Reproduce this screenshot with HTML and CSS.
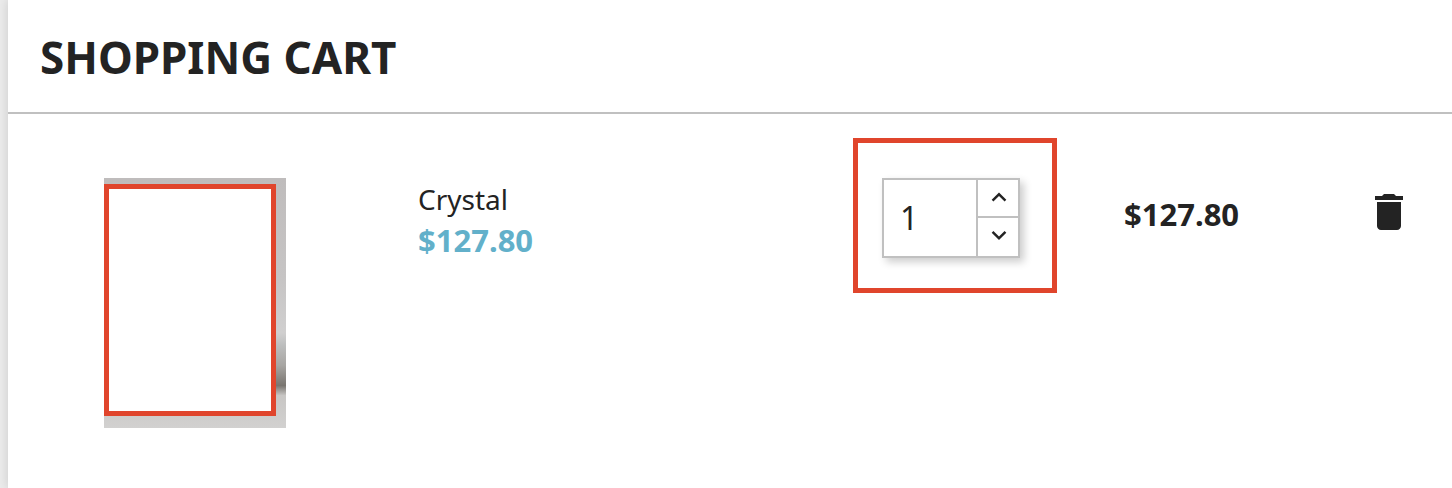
FILE: index.html
```html
<!DOCTYPE html>
<html lang="en">
<head>
  <meta charset="UTF-8">
  <meta name="viewport" content="width=device-width, initial-scale=1.0">
  <title>Shopping Cart</title>
  <link rel="stylesheet" href="styles.css">
</head>
<body>

  <div class="cart">
    <div class="cart-header">
      <h1>SHOPPING CART</h1>
    </div>

    <div class="cart-item">
      <div class="product-image">
        <div class="image-frame"></div>
      </div>

      <div class="product-info">
        <div class="product-name">Crystal</div>
        <div class="product-price">$127.80</div>
      </div>

      <div class="quantity-frame">
        <div class="quantity">
          <input type="text" class="quantity-input" value="1" aria-label="Quantity">
          <div class="quantity-buttons">
            <button type="button" class="quantity-up" aria-label="Increase">
              <svg width="16" height="10" viewBox="5.5 7.6 13 8.2"><path d="M7.41 15.41L12 10.83l4.59 4.58L18 14l-6-6-6 6z"/></svg>
            </button>
            <button type="button" class="quantity-down" aria-label="Decrease">
              <svg width="16" height="10" viewBox="5.5 7.8 13 8.2"><path d="M7.41 8.59L12 13.17l4.59-4.58L18 10l-6 6-6-6z"/></svg>
            </button>
          </div>
        </div>
      </div>

      <div class="total-price">$127.80</div>

      <a class="remove" href="#" aria-label="Remove">
        <svg width="48" height="48" viewBox="0 0 24 24"><path d="M6 19c0 1.1.9 2 2 2h8c1.1 0 2-.9 2-2V7H6v12zM19 4h-3.5l-1-1h-5l-1 1H5v2h14V4z"/></svg>
      </a>
    </div>
  </div>

</body>
</html>
```

FILE: styles.css
```css
* {
  box-sizing: border-box;
}

body {
  margin: 0;
  padding-left: 8px;
  background-color: #ebebeb;
  color: #232323;
  font-family: "Noto Sans", sans-serif;
  overflow: hidden;
}

.cart {
  height: 488px;
  background-color: #fff;
  box-shadow: 0 0 10px rgba(0, 0, 0, 0.14);
}

.cart-header {
  height: 114px;
  padding: 27px 32px 0;
  border-bottom: 2px solid #c0c0c0;
}

h1 {
  margin: 0;
  font-size: 44px;
  line-height: 60px;
  font-weight: 700;
}

.cart-item {
  display: flex;
  align-items: flex-start;
  padding: 24px 0 0 96px;
}

.product-image {
  width: 182px;
  height: 250px;
  margin-top: 40px;
  padding-top: 6px;
  background: linear-gradient(#bfbcbc 0, #c6c4c4 40%, #d0cfcf 62%, #bcbdbd 67%, #a7a5a2 75%, #797570 83%, #c8c6c4 87%, #d2d1d0 100%);
}

.image-frame {
  width: 172px;
  height: 232px;
  border: 5px solid #e0452c;
  background-color: #fff;
}

.product-info {
  width: 435px;
  margin: 40px 0 0 132px;
}

.product-name {
  font-size: 28px;
  line-height: 42px;
}

.product-price {
  color: #62b0ca;
  font-size: 31px;
  font-weight: 700;
  line-height: 40px;
}

.quantity-frame {
  width: 204px;
  height: 155px;
  padding: 35px 0 0 24px;
  border: 5px solid #e0452c;
}

.quantity {
  display: flex;
  width: 138px;
  height: 80px;
  border: 2px solid #c0c0c0;
  background-color: #fff;
  box-shadow: 4px 4px 8px rgba(0, 0, 0, 0.2);
}

.quantity-input {
  width: 92px;
  padding: 0 0 1px 16px;
  border: none;
  outline: none;
  color: #232323;
  background: none;
  font-family: inherit;
  font-size: 32px;
}

.quantity-buttons {
  display: flex;
  flex-direction: column;
  width: 42px;
}

.quantity-buttons button {
  display: flex;
  justify-content: center;
  width: 44px;
  height: 36px;
  padding: 12px 1px 0 0;
  border: none;
  border-left: 2px solid #c0c0c0;
  background: none;
}

.quantity-buttons .quantity-down {
  height: 40px;
  border-top: 2px solid #c0c0c0;
}

svg {
  display: block;
  fill: #232323;
}

.total-price {
  width: 241px;
  margin: 56px 0 0 67px;
  font-size: 31px;
  font-weight: 700;
  line-height: 40px;
}

.remove {
  margin-top: 50px;
}
```
